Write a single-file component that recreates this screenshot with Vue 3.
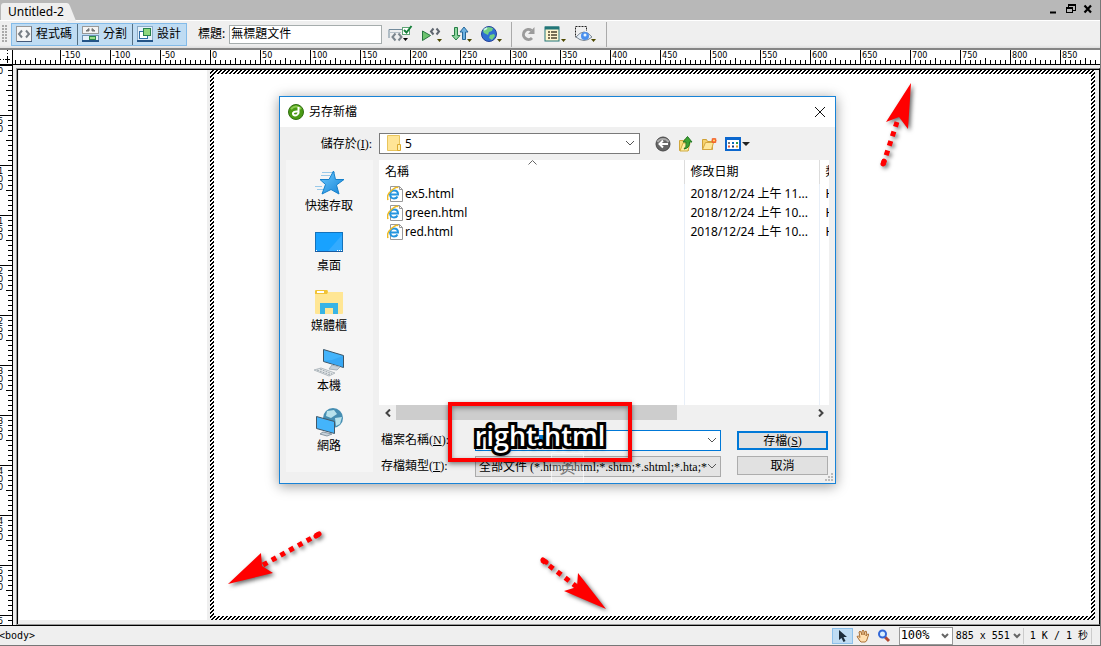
<script setup>
const origin = 197
const hTicks = []
for (let v = -195; v <= 885; v += 5) {
  hTicks.push({ v, x: origin + v, y: v % 50 === 0 ? 0 : v % 25 === 0 ? 8 : 10 })
}
const hLabels = hTicks.filter((t) => t.v % 50 === 0)

const vTicks = []
for (let v = 0; v <= 555; v += 5) {
  vTicks.push({ v, y: v, x: v % 50 === 0 ? 0 : v % 25 === 0 ? 6 : 8 })
}
const vDigits = []
for (let v = 0; v <= 550; v += 50) {
  String(v).split('').forEach((d, i) => {
    const y = v + 9 + i * 8
    if (y <= 560) vDigits.push({ d, y, key: v + '-' + i })
  })
}

const files = [
  { name: 'ex5.html', date: '2018/12/24 上午 11...' },
  { name: 'green.html', date: '2018/12/24 上午 10...' },
  { name: 'red.html', date: '2018/12/24 上午 10...' }
]
</script>

<template>
  <div class="app">
    <header class="titlebar">
      <div class="tab">Untitled-2<svg class="slope" width="9" height="18"><path d="M0 0 Q2 0 3 3 L9 18 H0 Z" fill="#efefef" /></svg></div>
      <div class="winbtns">
        <button aria-label="最小化"><svg width="10" height="10"><path d="M1 8.500h6" stroke="#000" stroke-width="2" /></svg></button>
        <button aria-label="還原"><svg width="10" height="10" shape-rendering="crispEdges"><path d="M9 1v5H7M.5 4v5M6.500 4v5M0 8.500h7M2.500 1v2" stroke="#000" fill="none" stroke-width="1" /><path d="M2 0h8v2H2zM0 3h7v2H0z" /></svg></button>
        <button aria-label="關閉"><svg width="10" height="10"><path d="M1.500 1.500l6.500 7M8 1.500l-6.500 7" stroke="#000" stroke-width="2.200" /></svg></button>
      </div>
    </header>

    <div class="toolbar">
      <span class="grip"></span>
      <div class="views">
        <button>
          <svg width="16" height="16"><rect x=".5" y=".5" width="15" height="15" fill="#f6f6f6" stroke="#999" /><path d="M1 15.500h15v-15" stroke="#44597a" fill="none" /><path d="M6 4.500L3 8l3 3.500M10 4.500L13 8l-3 3.500" stroke="#777e85" stroke-width="2" fill="none" /></svg>程式碼
        </button>
        <button>
          <svg width="17" height="16"><rect x=".5" y=".5" width="16" height="7" fill="#f4f4f4" stroke="#999" /><path d="M7 2.500L4 5h3zM10 2.500L13 5h-3z" fill="#777" stroke="#777" /><rect x=".5" y="9.500" width="16" height="6" fill="#e6f1fa" stroke="#6f93b4" /><path d="M0 15h17" stroke="#245487" stroke-width="2" /><rect x="7.500" y="10.500" width="6" height="3" fill="#9bdc8a" stroke="#2c8a4a" /></svg>分割
        </button>
        <button>
          <svg width="16" height="16"><rect x=".5" y=".5" width="15" height="15" fill="#e4f0fa" stroke="#8aaac6" /><path d="M0 15h16" stroke="#245487" stroke-width="2" /><rect x="2.500" y="5.500" width="8" height="7" fill="#fff" stroke="#316da5" /><rect x="6.500" y="2.500" width="7" height="7" fill="#8fd67c" stroke="#26824a" /></svg>設計
        </button>
      </div>
      <label class="doctitle" for="doc">標題:</label>
      <input id="doc" class="docinput" value="無標題文件" />
      <div class="tools">
        <button aria-label="驗證">
          <svg width="25" height="18"><path d="M1 13V4.500h13" stroke="#738b9c" fill="none" /><path d="M1 7.500h12" stroke="#b9c3ca" /><path d="M7.500 8.500l-3 3.500 3 3.500M10.500 8.500l3 3.500-3 3.500" stroke="#7c858c" stroke-width="2" fill="none" /><rect x="14.500" y="2.500" width="7" height="7" fill="#fff" stroke="#60a575" /><path d="M16 5l2.500 2.500L23.500 1" stroke="#16803a" stroke-width="2" fill="none" /><path d="M15 13h5l-2.500 3z" /></svg>
        </button>
        <button aria-label="預覽">
          <svg width="22" height="18"><path d="M1.500 6l8 4.500-8 5z" fill="#6cc36e" stroke="#267540" /><path d="M12.500 3.500l-2.500 3 2.500 3M15.500 3.500l2.500 3-2.500 3" stroke="#5f666f" stroke-width="2" fill="none" /><path d="M16 14h5l-2.500 3z" fill="#4d4900" /></svg>
        </button>
        <button aria-label="檔案管理">
          <svg width="22" height="18"><path d="M3.500 2.500h3v8h2.500L5 15 1 10.500h2.500z" fill="#8ed69e" stroke="#267e46" /><path d="M11.500 14.500h3V7h2.500L13 2 9 7h2.500z" fill="#6db2e2" stroke="#266799" /><path d="M16 14h5l-2.500 3z" fill="#4d4900" /></svg>
        </button>
        <button aria-label="瀏覽器">
          <svg width="22" height="18"><circle cx="8" cy="9" r="7.500" fill="#2e6fd2" stroke="#24419a" /><path d="M3 4l4-2 5 1-1 3-3 1-1 3-4-2-1-2zM9 10l4-1 1 2-3 4-3-2z" fill="#71cf84" /><path d="M3 5l3-2" stroke="#c9f4e2" stroke-width="2" /><path d="M16 14h5l-2.500 3z" fill="#4d4900" /></svg>
        </button>
        <span class="sep"></span>
        <button aria-label="重新整理">
          <svg width="16" height="18"><path d="M11.500 5.500A5 5 0 1 0 12 13" stroke="#9b9b9b" stroke-width="3" fill="none" /><path d="M14.500 2v7H8z" fill="#9b9b9b" /></svg>
        </button>
        <button aria-label="檢視選項">
          <svg width="22" height="18"><rect x="1" y="2" width="14" height="14" fill="#fff6cf" stroke="#227678" /><path d="M1 3h14" stroke="#227678" stroke-width="3" /><path d="M4 7h2M4 10h2M4 13h2M7 7h6M7 10h6M7 13h6" stroke="#49432e" stroke-width="1.500" /><path d="M17 14h5l-2.500 3z" fill="#4d4900" /></svg>
        </button>
        <button aria-label="視覺輔助">
          <svg width="24" height="18"><path d="M3 12H1.500V1.500h11V6" stroke="#222" stroke-dasharray="2 1" fill="none" /><path d="M2 12q8-10 16 0-8 7-16 0z" fill="#e5eef8" stroke="#7b8792" /><circle cx="11" cy="11" r="4" fill="#4b90ee" /><circle cx="11" cy="10" r="1.500" fill="#e9f6ff" /><path d="M17 14h5l-2.500 3z" fill="#4d4900" /></svg>
        </button>
        <span class="sep"></span>
      </div>
    </div>

    <div class="hruler">
      <div class="corner"><svg width="12" height="14" shape-rendering="crispEdges"><path d="M7.500 0v14M0 9.500h12" stroke="#000" stroke-dasharray="1 2" /><path d="M5 9.500h5M7.500 7v5" stroke="#000" /></svg></div>
      <svg class="hscale" shape-rendering="crispEdges">
        <rect v-for="t in hTicks" :key="t.v" :x="t.x" :y="t.y" width="1" :height="14 - t.y" />
        <text v-for="t in hLabels" :key="'l' + t.v" :x="t.x + 2" y="8">{{ t.v }}</text>
      </svg>
    </div>

    <main class="work">
      <div class="vruler">
        <svg class="vscale" shape-rendering="crispEdges">
          <rect v-for="t in vTicks" :key="t.v" :x="t.x" :y="t.y" :width="12 - t.x" height="1" />
          <text v-for="t in vDigits" :key="t.key" x="-2" :y="t.y">{{ t.d }}</text>
        </svg>
      </div>
      <div class="stage">
        <div class="leftframe"></div>
        <div class="rightframe">
          <svg class="hatch" shape-rendering="crispEdges" aria-hidden="true">
            <defs><pattern id="hatch" width="4" height="4" patternUnits="userSpaceOnUse"><rect width="4" height="4" fill="#fff" /><path d="M2 0h2v1H2zM1 1h2v1H1zM0 2h2v1H0zM0 3h1v1H0zM3 3h1v1H3z" /></pattern></defs>
            <rect width="100%" height="100%" fill="url(#hatch)" />
          </svg>
          <div class="page"></div>
        </div>
      </div>
    </main>

    <footer class="status">
      <span class="path">&lt;body&gt;</span>
      <button class="pick on" aria-label="選取"><svg width="12" height="14"><path d="M3 1v10l2.500-2 2 4 2-1-2-4H11z" fill="#1d2d3b" /></svg></button>
      <button class="pick" aria-label="手形"><svg width="15" height="14"><path d="M4 12L1 7.500q1-1.500 3 1L3 3q1-1.500 2 0l1 3V2q1-1.500 2 0v4l1-3.500q1.500-1 1.500.5L10 7l1.500-2q1.500-.5 1 1L10.500 12 9 13H5z" fill="#ffdfaf" stroke="#aa7138" /></svg></button>
      <button class="pick" aria-label="縮放"><svg width="14" height="14"><path d="M8 8l4 4" stroke="#b24932" stroke-width="3" /><circle cx="5.500" cy="5" r="3.500" fill="#d9efff" stroke="#3368d7" stroke-width="2" /></svg></button>
      <div class="combo zoom"><select aria-label="縮放比例"><option>100%</option></select><svg width="8" height="6"><path d="M1 1l3 3 3-3" stroke="#666" stroke-width="2" fill="none" /></svg></div>
      <button class="dims">885 x 551<svg width="8" height="6"><path d="M1 1l3 3 3-3" stroke="#666" stroke-width="2" fill="none" /></svg></button>
      <span class="size">1 K / 1 秒</span>
    </footer>

    <section class="dialog" role="dialog" aria-labelledby="dlg">
      <div class="dtitle">
        <svg width="16" height="16"><circle cx="8" cy="8" r="7.500" fill="#4a9b15" stroke="#316f12" /><path d="M3 5q5-5 10 0" stroke="#8ccc51" fill="none" stroke-width="2" /><path d="M10.500 3v6q-1 2.500-3.500 2.500Q4.500 11 5 9q1-2 5-1.500" stroke="#fff" stroke-width="2" fill="none" /></svg>
        <h1 id="dlg">另存新檔</h1>
        <button aria-label="關閉"><svg width="12" height="12"><path d="M1 1l10 10M11 1L1 11" stroke="#111" /></svg></button>
      </div>
      <div class="dbody">
        <label class="lookin" for="loc">儲存於(<u>I</u>):</label>
        <div class="locrow">
          <div class="combo loc">
            <svg class="fold" width="14" height="17"><path d="M.5.5h12v15H.5z" fill="#ffe596" stroke="#e9c55c" /><path d="M10.500 9.500h3v6h-3z" fill="#fff0ae" stroke="#dba92e" /></svg>
            <select id="loc"><option>5</option></select>
            <svg class="chev" width="10" height="7"><path d="M1 1l4 4 4-4" stroke="#555" fill="none" /></svg>
          </div>
          <div class="nav">
            <button aria-label="上一步"><svg width="16" height="16"><circle cx="8" cy="8" r="7" fill="#666" stroke="#474747" /><path d="M2.500 6a6 5 0 0 1 11 0" stroke="#aaa" fill="none" stroke-width="2" /><path d="M13 8H5M8 4.500L4.500 8 8 11.500" stroke="#fff" stroke-width="2" fill="none" /></svg></button>
            <button aria-label="上一層"><svg width="16" height="16"><path d="M1.500 14.500v-10h4l1-1h4v11z" fill="#f8dc78" stroke="#d0a73d" /><path d="M2 15l3-8h7l-2 8z" fill="#ffeda2" stroke="#cfab42" /><path d="M6 13q3-2 2-7H5l4.500-5.500L14 6h-2.500q.5 6-5.500 7z" fill="#3ca333" stroke="#237722" /></svg></button>
            <button aria-label="新資料夾"><svg width="17" height="16"><path d="M1.500 13.500v-10h4l1 2h5v8z" fill="#f7d36d" stroke="#cfa136" /><path d="M1.500 13.500l3-7h8l-2 7z" fill="#ffe89a" stroke="#d5a741" /><path d="M13 2v5M10.500 4.500h5M11 2.500l4 4M15 2.500l-4 4" stroke="#f4632b" stroke-width="1.500" /><circle cx="13" cy="4.500" r="1" fill="#ffe36a" /></svg></button>
            <button aria-label="檢視"><svg width="25" height="16"><rect x="1" y="2" width="14" height="12" fill="#fff" stroke="#0b67ce" stroke-width="2" /><path d="M0 2.500h16" stroke="#0b67ce" stroke-width="3" /><path d="M3 7h2" stroke="#777" stroke-width="2" /><path d="M7 7h2" stroke="#0870bd" stroke-width="2" /><path d="M11 7h2" stroke="#299b4a" stroke-width="2" /><path d="M3 10.500h2" stroke="#e2563a" stroke-width="2" /><path d="M7 10.500h2" stroke="#153c7c" stroke-width="2" /><path d="M11 10.500h2" stroke="#d8a021" stroke-width="2" /><path d="M17 6h8l-4 4z" fill="#222" /></svg></button>
          </div>
        </div>

        <nav class="places">
          <button><svg width="32" height="32"><defs><linearGradient id="star" x2="1" y2="1"><stop stop-color="#6dcaff" /><stop offset="1" stop-color="#1583d6" /></linearGradient></defs><path d="M9 6.500h13M8 9.500h9M2 20.500h7M4 23.500h7" stroke="#99c9e9" /><path d="M20.500 5l2 8.500H31L23.500 19l2.500 9-8-4.500L9 28l3.500-9.500L7 13.500h9z" fill="url(#star)" stroke="#1580cb" /></svg>快速存取</button>
          <button><svg width="32" height="32"><rect x="2.500" y="6.500" width="27" height="19" fill="#18a2ff" stroke="#1372bb" /><path d="M15 25L29 9v16z" fill="#33abff" /><path d="M2 25.500h28" stroke="#195ba0" /><path d="M3 24.500h1M24 24.500h1M26 24.500h1M28 24.500h1" stroke="#fff" /></svg>桌面</button>
          <button><svg width="32" height="32"><path d="M2 4h13v2h15v21q0 1-1 1H3q-1 0-1-1z" fill="#ffe694" /><path d="M3 4h11l1 2-1 2H2V5z" fill="#f1c337" /><path d="M4 6h7" stroke="#fff" stroke-width="2" /><path d="M7 28V17h18v11h-5v-6h-8v6z" fill="#38b4e5" /></svg>媒體櫃</button>
          <button><svg width="32" height="32"><path d="M10.500 3.500l20 6v12l-20-6z" fill="#44b4fb" stroke="#3d5566" /><path d="M19 14L30 10v11l-19-6z" fill="#2a9cf0" opacity=".5" /><path d="M19 19l-3 4 8 1 3-3z" fill="#c7d2da" stroke="#a5b1b9" /><path d="M1 24l7-2 14 5-6 3z" fill="#e4e7e9" stroke="#b4bcc1" /><path d="M4 24l13 5M7 23l12 5" stroke="#9ba7ad" stroke-dasharray="2 1" /></svg>本機</button>
          <button><svg width="32" height="32"><circle cx="20" cy="12" r="10" fill="#468eb2" /><path d="M14 5l7-1 3 4-6 4-5-2zM22 12l7-1-2 7-4 2z" fill="#b8e2ec" /><path d="M3.500 10.500l18 5v12l-18-5z" fill="#44b4fb" stroke="#435868" /><path d="M10 26l-3 2 7 2 5-2z" fill="#c7d2da" stroke="#8998a3" /></svg>網路</button>
        </nav>

        <div class="mainpart">
          <div class="list">
            <table>
              <colgroup><col /><col class="cdate" /><col class="ctype" /></colgroup>
              <thead><tr><th>名稱<svg class="sort" width="9" height="5"><path d="M.5 4.500l4-4 4 4" stroke="#666" fill="none" /></svg></th><th>修改日期</th><th>類</th></tr></thead>
              <tbody>
                <tr v-for="f in files" :key="f.name">
                  <td><span class="file"><svg width="16" height="16"><path d="M3.500.5h9l3 3v12h-12z" fill="#fff" stroke="#999" /><path d="M12.500.5v3h3" fill="none" stroke="#999" /><path d="M3 8.500h8q0-4-4-4-3.500 0-4 4 .5 4 4 4 2.500 0 3.500-2" stroke="#2595df" stroke-width="2" fill="none" /><path d="M1 14Q-1 9 5 4q5-4 6-2" stroke="#edba26" stroke-width="1.500" fill="none" /></svg>{{ f.name }}</span></td>
                  <td>{{ f.date }}</td>
                  <td>H</td>
                </tr>
                <tr class="rest"><td></td><td></td><td></td></tr>
              </tbody>
            </table>
          </div>
          <div class="scroll">
            <button aria-label="向左捲動"><svg width="6" height="8"><path d="M5 .5L1.500 4 5 7.500" stroke="#444" stroke-width="2" fill="none" /></svg></button>
            <div class="track"><div class="thumb"></div></div>
            <button aria-label="向右捲動"><svg width="6" height="8"><path d="M1 .5L4.500 4 1 7.500" stroke="#444" stroke-width="2" fill="none" /></svg></button>
          </div>
          <div class="form">
            <label for="fn">檔案名稱(<u>N</u>):</label>
            <div class="combo fname"><input id="fn" /><svg class="chev" width="10" height="7"><path d="M1 1l4 4 4-4" stroke="#555" fill="none" /></svg></div>
            <button class="btn primary">存檔(<u>S</u>)</button>
            <label for="ft">存檔類型(<u>T</u>):</label>
            <div class="combo ftype"><select id="ft"><option>全部文件 (*.htm;*.html;*.shtm;*.shtml;*.hta;*</option></select><svg class="chev" width="10" height="7"><path d="M1 1l4 4 4-4" stroke="#555" fill="none" /></svg></div>
            <button class="btn">取消</button>
          </div>
        </div>
      </div>
      <svg class="resize" width="9" height="9" shape-rendering="crispEdges"><path d="M6 0h2v2H6zM3 3h2v2H3zM6 3h2v2H6zM0 6h2v2H0zM3 6h2v2H3zM6 6h2v2H6z" fill="#bbb" /></svg>
      <span class="ime">英</span>
      <div class="callout">right.html</div>
    </section>

    <svg class="arrows" aria-hidden="true">
      <g fill="#f00" stroke="none">
        <path d="M911 83L886 122 899 117 908 129z" />
        <path d="M228 584L261 553 262 566 273 573z" />
        <path d="M606 609L578 573 577 587 564 591z" />
      </g>
      <g stroke="#f00" stroke-width="5" fill="none" stroke-dasharray="5 5">
        <path d="M897 122L883 165" /><path d="M263 565L319 534" /><path d="M577 587L542 560" />
      </g>
      <g stroke="#f00" stroke-width="5" stroke-linecap="round"><path d="M883 164l1-3M319 534l-3 2M543 560l3 2" /></g>
    </svg>
  </div>
</template>

<style>
body { background: #efefef; }
</style>

<style scoped>
* { box-sizing: border-box; }
.app { position: relative; display: flex; flex-direction: column; min-height: 100vh; overflow: hidden; border-right: 1px solid #777; border-bottom: 1px solid #777; background: #efefef; color: #000; font: 12px/16px "Noto Sans", "Noto Sans CJK TC", sans-serif; }
button { border: 0; background: none; padding: 0; margin: 0; font: inherit; color: inherit; display: flex; align-items: center; justify-content: center; }
svg { display: block; flex: none; }
input, select { font: inherit; color: inherit; margin: 0; border: 0; padding: 0; background: none; appearance: none; border-radius: 0; min-width: 0; outline: 0; }
u { text-underline-offset: 1px; }

.titlebar { display: flex; justify-content: space-between; height: 20px; background: #b8b8b8; }
.tab { position: relative; align-self: flex-end; height: 17px; margin-left: 1px; padding: 0 0 0 7px; width: 66px; white-space: nowrap; background: #efefef; border-radius: 3px 0 0 0; line-height: 18px; }
.slope { position: absolute; left: 66px; top: 0; }
.winbtns { display: flex; gap: 7px; padding: 0 7px 3px 0; align-items: center; }

.toolbar { display: flex; align-items: center; height: 30px; padding-bottom: 1px; background: linear-gradient(#efefef 24px, #d8d8d8 28px); border-top: 1px solid #fff; border-bottom: 2px solid #858585; }
.grip { width: 6px; height: 18px; margin: 0 3px 0 2px; background: radial-gradient(circle at 1px 1px, #aaa 1px, transparent 1px) 0 0 / 3px 3px; }
.views { display: flex; height: 23px; border: 1px solid #83bbe9; background: #bfdcf3; }
.views button { gap: 4px; padding: 0 5px 0 4px; }
.views button + button { border-left: 1px solid #557084; }
.doctitle { margin: 0 4px 0 11px; }
.docinput { width: 153px; height: 19px; border: 1px solid #a6adad; background: #fff; padding: 0 1px 3px; }
.tools { display: flex; align-items: center; gap: 8px; margin-left: 6px; }
.sep { width: 1px; height: 25px; background: #aaa; }

.hruler { display: flex; height: 15px; background: #fff; border-bottom: 1px solid #000; }
.corner { width: 13px; border-right: 1px solid #000; }
.hscale { flex: 1; width: 0; height: 14px; }
.hscale text, .vscale text { font: 9px "DejaVu Sans Condensed", "Noto Sans", sans-serif; }
.work { flex: 1; display: flex; min-height: 0; }
.vruler { position: relative; width: 13px; background: #fff; border-right: 1px solid #000; }
.vscale { position: absolute; inset: 0; width: 12px; height: 100%; }
.stage { flex: 1; display: flex; margin: 3px 0 0 3px; border: 1px solid #999; border-right-color: #000; box-shadow: inset 1px 1px 0 #000; padding: 1px 4px 4px 2px; background: #efefef; }
.leftframe { width: 188px; background: #fff; margin-right: 3px; }
.rightframe { position: relative; flex: 1; padding: 4px; }
.hatch { position: absolute; inset: 0; width: 100%; height: 100%; }
.page { position: relative; height: 100%; background: #fff; }

.status { display: flex; align-items: center; height: 20px; border-top: 1px solid #000; font: 10px/16px "DejaVu Sans Mono", "Noto Sans CJK TC", monospace; padding-right: 8px; }
.path { flex: 1; margin-left: -1px; }
.pick { width: 21px; height: 16px; }
.pick.on { background: #bfdcf3; border: 1px solid #8dc0ea; }
.combo { position: relative; display: flex; align-items: center; background: #fff; border: 1px solid #7a7a7a; }
.zoom { width: 54px; height: 18px; margin: 0 3px 0 4px; padding: 0 3px 0 1px; border-color: #999; }
.zoom select { flex: 1; font-size: 12px; padding-bottom: 2px; }
.dims { gap: 3px; padding-right: 2px; border-right: 1px solid #ccc; height: 16px; }
.size { padding: 0 3px 0 6px; border-right: 1px solid #ccc; white-space: nowrap; }

.dialog { position: absolute; left: 279px; top: 96px; width: 557px; border: 1px solid #1883d7; background: #f0f0f0; box-shadow: 0 2px 12px rgba(0, 0, 0, .4); }
.dtitle { display: flex; align-items: center; height: 30px; padding: 0 9px 0 8px; background: #fff; }
.dtitle h1 { flex: 1; margin: 0 0 0 5px; font: inherit; }
.dbody { display: grid; grid-template-columns: 87px 1fr; gap: 6px; padding: 6px; }
.lookin { align-self: center; text-align: right; margin-right: 1px; white-space: nowrap; }
.lookin, .form { font-family: "Liberation Serif", "Noto Sans CJK TC", serif; }
.locrow { display: flex; height: 21px; }
.loc { width: 261px; padding: 0 4px 0 7px; }
.loc select { flex: 1; margin-left: 4px; }
.nav { display: flex; align-items: center; gap: 7px; margin-left: 15px; }
.places { display: flex; flex-direction: column; gap: 12px; align-self: start; padding: 6px 1px 18px 0; background: #f5f5f5; }
.places button { flex-direction: column; height: 48px; }
.mainpart { display: flex; flex-direction: column; }
.list { height: 245px; background: #fff; overflow: hidden; }
table { width: 100%; height: 100%; table-layout: fixed; border-collapse: collapse; }
.cdate { width: 135px; }
.ctype { width: 10px; }
th { position: relative; height: 24px; padding: 0 0 0 6px; text-align: left; font-weight: 400; overflow: hidden; white-space: nowrap; }
th + th { border-left: 1px solid #ddd; }
td { height: 19px; padding: 0 0 0 6px; overflow: hidden; white-space: nowrap; }
td + td { border-left: 1px solid #e8eff8; }
.rest td { height: auto; }
.file { display: flex; align-items: center; gap: 2px; padding-left: 2px; }
.sort { position: absolute; left: 149px; top: 0; }
.scroll { display: flex; height: 15px; }
.scroll button { width: 17px; }
.track { flex: 1; }
.thumb { width: 67.5%; height: 100%; background: #cdcdcd; }
.form { display: grid; grid-template-columns: 96px 1fr 91px; gap: 5px 0; margin: 10px 1px 0 0; align-items: start; }
.form label { padding: 2px 0 0 2px; }
.form .combo { height: 21px; margin-right: 16px; padding: 0 3px; }
.form .fname { border-color: #0078d7; }
.form .fname input { height: 15px; background: linear-gradient(#0078d7, #0078d7) 60px 2px / 10px 8px no-repeat; }
.form input, .form select { flex: 1; width: 0; }
.form .ftype { background: #e4e4e4; border-color: #aaa; }
.btn { height: 19px; background: #e1e1e1; border: 1px solid #adadad; }
.primary { margin-top: 1px; border: 2px solid #0078d7; }
.resize { position: absolute; right: 1px; bottom: 1px; }
.ime { position: absolute; left: 271px; top: 356px; width: 33px; height: 30px; border: 1px solid rgba(255, 255, 255, .6); background: rgba(240, 240, 240, .3); color: #777; font-size: 16px; line-height: 26px; text-align: center; }
.callout { position: absolute; left: 168px; top: 305px; width: 184px; height: 60px; border: 4px solid #f00; box-shadow: 0 2px 5px rgba(0, 0, 0, .5), inset 0 2px 5px rgba(0, 0, 0, .4); padding-top: 10px; text-align: center; color: #fff; font: 600 27px/40px "Open Sans", "Noto Sans", sans-serif; -webkit-text-stroke: 6px #000; paint-order: stroke fill; stroke-linejoin: round; text-shadow: 1px 3px 4px rgba(0, 0, 0, .6); }
.arrows { position: absolute; inset: 0; width: 100%; height: 100%; pointer-events: none; filter: drop-shadow(2px 2px 2px rgba(0, 0, 0, .6)); }
</style>
